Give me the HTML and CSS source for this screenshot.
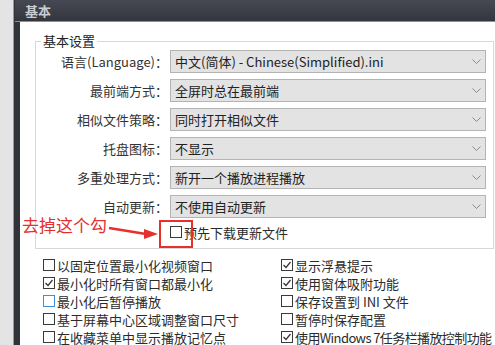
FILE: index.html
```html
<!DOCTYPE html>
<html lang="zh-CN">
<head>
    <meta charset="UTF-8" />
    <title>基本</title>
    <link rel="stylesheet" href="styles.css">
</head>
<body>
    <div class="app">
        <div class="side"></div>
        <div class="main">
            <div class="header">基本</div>
            <div class="content">
                <fieldset class="group">
                    <legend>基本设置</legend>
                    <div class="form">
                        <label>语言(Language)：</label>
                        <div class="select">中文(简体) - Chinese(Simplified).ini<svg class="chev" width="9" height="5"><polyline points="0.5,0.5 4.5,4.5 8.5,0.5" /></svg></div>
                        <label>最前端方式：</label>
                        <div class="select">全屏时总在最前端<svg class="chev" width="9" height="5"><polyline points="0.5,0.5 4.5,4.5 8.5,0.5" /></svg></div>
                        <label>相似文件策略：</label>
                        <div class="select">同时打开相似文件<svg class="chev" width="9" height="5"><polyline points="0.5,0.5 4.5,4.5 8.5,0.5" /></svg></div>
                        <label>托盘图标：</label>
                        <div class="select">不显示<svg class="chev" width="9" height="5"><polyline points="0.5,0.5 4.5,4.5 8.5,0.5" /></svg></div>
                        <label>多重处理方式：</label>
                        <div class="select">新开一个播放进程播放<svg class="chev" width="9" height="5"><polyline points="0.5,0.5 4.5,4.5 8.5,0.5" /></svg></div>
                        <label>自动更新：</label>
                        <div class="select">不使用自动更新<svg class="chev" width="9" height="5"><polyline points="0.5,0.5 4.5,4.5 8.5,0.5" /></svg></div>
                        <div class="note-cell">
                            <div class="note">
                                <span>去掉这个勾</span>
                                <svg width="52" height="26">
                                    <line x1="2" y1="13" x2="39" y2="19" />
                                    <polygon points="37,14 51,19 37,24" />
                                </svg>
                            </div>
                        </div>
                        <div class="check-item mark">
                            <span class="box"></span>预先下载更新文件
                            <span class="redbox"></span>
                        </div>
                    </div>
                </fieldset>

                <div class="checks">
                    <div class="check-item"><span class="box"></span>以固定位置最小化视频窗口</div>
                    <div class="check-item"><span class="box on"><svg width="10" height="10"><polyline points="1.5,5 4,7.5 8.5,2" /></svg></span>显示浮悬提示</div>
                    <div class="check-item"><span class="box on"><svg width="10" height="10"><polyline points="1.5,5 4,7.5 8.5,2" /></svg></span>最小化时所有窗口都最小化</div>
                    <div class="check-item"><span class="box on"><svg width="10" height="10"><polyline points="1.5,5 4,7.5 8.5,2" /></svg></span>使用窗体吸附功能</div>
                    <div class="check-item"><span class="box focus"></span>最小化后暂停播放</div>
                    <div class="check-item"><span class="box"></span>保存设置到 INI 文件</div>
                    <div class="check-item"><span class="box"></span>基于屏幕中心区域调整窗口尺寸</div>
                    <div class="check-item"><span class="box"></span>暂停时保存配置</div>
                    <div class="check-item"><span class="box"></span>在收藏菜单中显示播放记忆点</div>
                    <div class="check-item tight"><span class="box on"><svg width="10" height="10"><polyline points="1.5,5 4,7.5 8.5,2" /></svg></span>使用Windows 7任务栏播放控制功能</div>
                </div>
            </div>
        </div>
    </div>
</body>
</html>
```

FILE: styles.css
```css
* {
    padding: 0;
    margin: 0;
    box-sizing: border-box;
}

body {
    width: 495px;
    height: 345px;
    overflow: hidden;
    background: white;
    font-family: "Noto Sans CJK SC", "Noto Sans", sans-serif;
    font-size: 13px;
    color: #2b2b2b;
}

.app {
    display: flex;
    height: 345px;
}

.side {
    flex-shrink: 0;
    width: 14px;
    background: #e4e4e4;
    border-right: 1px solid #9a9a9a;
}

.main {
    flex: 1;
    min-width: 0;
    border-left: 6px solid #30333a;
}

.header {
    height: 22px;
    margin-left: -5px;
    padding-left: 10px;
    background: linear-gradient(#464953, #34363e);
    border-bottom: 1px solid #8d9097;
    color: #c9ccd3;
    font-size: 13px;
    line-height: 21px;
    font-weight: bold;
}

.content {
    overflow: hidden;
}

.group {
    margin: 12px 1px 0 15px;
    padding: 2px 7px 6px 0;
    border: 1px solid #d8d8d8;
    min-width: 0;
}

.group legend {
    margin-left: 5px;
    padding: 0 2px;
    line-height: 14px;
    font-size: 13px;
    color: #222;
}

.form {
    display: grid;
    grid-template-columns: 132px 316px;
    grid-template-rows: repeat(6, 23px) 18px;
    column-gap: 2px;
    row-gap: 6px;
}

.form label {
    text-align: right;
    line-height: 23px;
    color: #333;
    white-space: nowrap;
}

.select {
    display: flex;
    align-items: center;
    justify-content: space-between;
    padding: 0 4px 0 4px;
    background: #e3e3e3;
    border: 1px solid #b4b4b4;
    line-height: 21px;
    color: #222;
    white-space: nowrap;
}

.chev polyline {
    fill: none;
    stroke: #8a8a8a;
    stroke-width: 1;
}

.note-cell {
    position: relative;
    margin-top: -1px;
}

.note {
    position: absolute;
    left: -14px;
    top: -8px;
    display: flex;
    align-items: flex-start;
    color: #e5302d;
    font-size: 17px;
    line-height: 20px;
    white-space: nowrap;
}

.note line {
    stroke: #e5302d;
    stroke-width: 2.5;
}

.note polygon {
    fill: #e5302d;
}

.check-item {
    position: relative;
    display: flex;
    align-items: center;
    height: 18px;
    white-space: nowrap;
}

.check-item.tight {
    letter-spacing: -0.6px;
}

.form .check-item {
    margin-top: -1px;
}

.box {
    display: flex;
    align-items: center;
    justify-content: center;
    width: 12px;
    height: 12px;
    margin-right: 2px;
    background: white;
    border: 1px solid #3a3a3a;
}

.box svg polyline {
    fill: none;
    stroke: #333;
    stroke-width: 1.2;
}

.box.focus {
    border-color: #3f8fdc;
}

.redbox {
    position: absolute;
    left: -11px;
    top: -3px;
    width: 34px;
    height: 28px;
    border: 2px solid #e5302d;
}

.checks {
    display: grid;
    grid-template-columns: 238px 1fr;
    grid-auto-rows: 18px;
    margin-top: 7px;
    padding-left: 23px;
}
```
